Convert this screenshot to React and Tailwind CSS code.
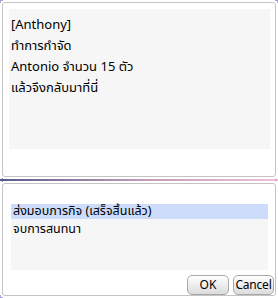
import React from "react";

const font = { fontFamily: "Tahoma, 'Noto Sans Thai', 'Liberation Sans', 'DejaVu Sans', sans-serif" };

export default function App() {
  return (
    <div className="relative w-[278px] h-[298px] bg-white overflow-hidden text-[13px] text-black" style={font}>
      {/* corner marks */}
      <div className="absolute left-0 top-0 w-[3px] h-[3px] border-l border-t border-[#a9a2d6]" />
      <div className="absolute right-0 top-0 w-[3px] h-[3px] border-r border-t border-[#a9a2d6]" />
      <div className="absolute left-0 bottom-0 w-[3px] h-[3px] border-l border-b border-[#a9a2d6]" />

      <div className="flex flex-col pt-[2px] pl-[2px] pr-[2px]">
        {/* top panel */}
        <div className="h-[175px] border border-[#c4c4c4] rounded-[3px] pt-[6px] pl-[6px] pr-[5px]">
          <div className="h-[140px] bg-[#f6f6f6] pl-[2px] pt-[6px] flex flex-col leading-[21px]">
            <div>[Anthony]</div>
            <div>ทำการกำจัด</div>
            <div>Antonio จำนวน 15 ตัว</div>
            <div>แล้วจึงกลับมาที่นี่</div>
          </div>
        </div>

        {/* separator */}
        <div className="relative h-[6px] -mx-[2px] flex items-center">
          <div className="h-[2px] w-full bg-gradient-to-r from-[#5a5a8c] via-[#c09ab8] to-[#f0bfe0]" />
          <div className="absolute left-0 top-[1px] w-0 h-0 border-y-[2px] border-y-transparent border-r-[3px] border-r-[#5a5a8c]" />
          <div className="absolute right-0 top-[1px] w-0 h-0 border-y-[2px] border-y-transparent border-l-[3px] border-l-[#e8a8d0]" />
        </div>

        {/* bottom panel */}
        <div className="h-[113px] border border-[#c4c4c4] rounded-[3px] flex flex-col pt-[20px] pl-[8px]">
          <div className="pr-[7px]">
            <div className="h-[66px] bg-[#f6f6f6] flex flex-col text-[12.5px]">
              <div className="bg-[#cddcfa] pl-[2px] h-[15px] leading-[15px]">ส่งมอบภารกิจ (เสร็จสิ้นแล้ว)</div>
              <div className="pl-[2px] mt-[3px] leading-[15px]">จบการสนทนา</div>
            </div>
          </div>
          <div className="flex justify-end gap-[4px] mt-[5px] pr-[1px]">
            <button className="w-[42px] h-[20px] rounded-[5px] border border-[#a8a8a8] bg-gradient-to-b from-white to-[#dcdcdc] text-[12px] leading-none text-black">OK</button>
            <button className="w-[41px] h-[20px] rounded-[5px] border border-[#a8a8a8] bg-gradient-to-b from-white to-[#dcdcdc] text-[12px] leading-none text-black tracking-[-0.2px]">Cancel</button>
          </div>
        </div>
      </div>
    </div>
  );
}
